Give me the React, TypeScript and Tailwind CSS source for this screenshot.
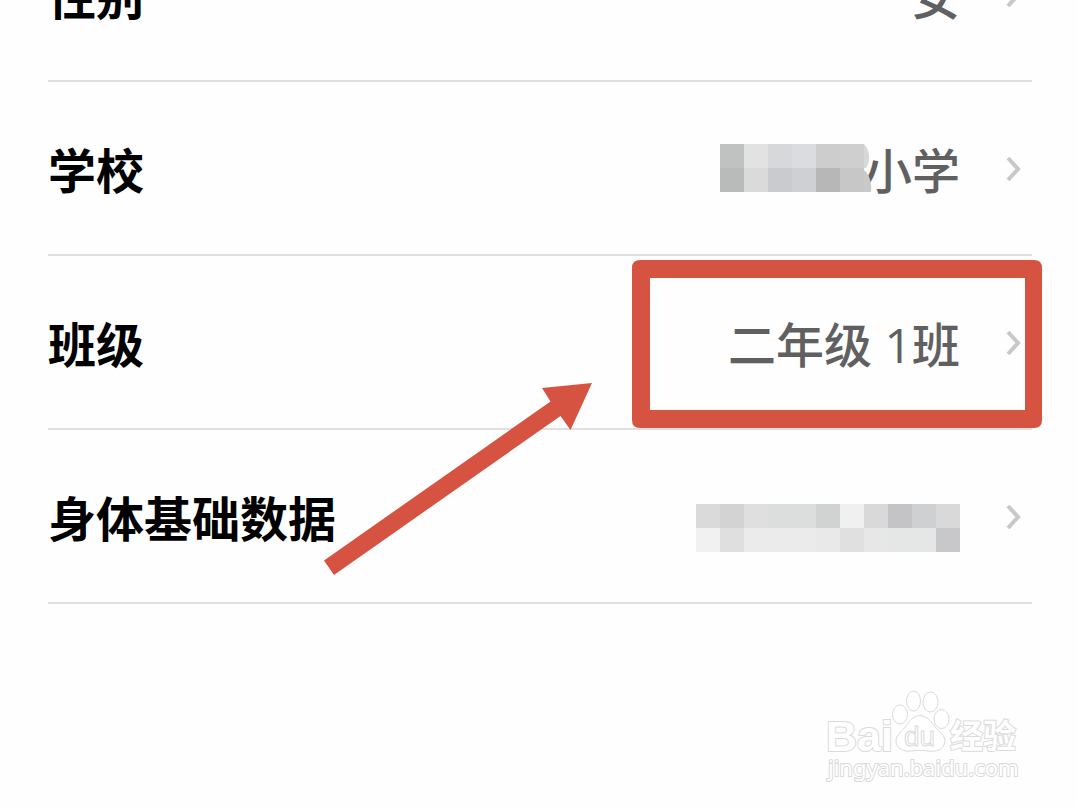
import React from "react";

const RED = "#d65342";

type MosaicProps = {
    colors: string[][];
    label: string;
    className?: string;
    rounded?: boolean;
};

// blurred out value, squares of 24px
function Mosaic({ colors, label, className, rounded }: MosaicProps) {
    const width = colors[0].length * 24;
    return (
        <svg role="img" aria-label={label} width={rounded ? 152 : width} height={48} className={className} shapeRendering="crispEdges">
            {colors.map((row, y) =>
                row.map((color, x) => (
                    <rect key={`${x}-${y}`} x={x * 24} y={y * 24} width={24} height={24} fill={color} />
                ))
            )}
            {rounded && (
                <>
                    <path d="M144 0C150 6 151 17 146 24L144 24Z" fill="#d8d8d8" shapeRendering="auto" />
                    <path d="M144 26C149 30 152 38 151 48L144 48Z" fill="#c9c9c9" shapeRendering="auto" />
                </>
            )}
        </svg>
    );
}

function Chevron() {
    return (
        <svg width={24} height={32} viewBox="0 0 24 32" fill="none" stroke="#c8c8c8" strokeWidth={4} className="ml-10 mr-2 mt-0.5">
            <path d="M8 5L18 16L8 27" />
        </svg>
    );
}

type RowProps = {
    title: string;
    children: React.ReactNode;
    overlay?: React.ReactNode;
};

function Row({ title, children, overlay }: RowProps) {
    return (
        <li className="relative border-b-2 border-[#e0e0e0]">
            <button type="button" className="flex h-[172px] w-full items-center justify-between text-left">
                <span className="pt-1.5 font-bold text-black">{title}</span>
                <span className="flex items-center font-medium text-[#606060]">
                    {children}
                    <Chevron />
                </span>
            </button>
            {overlay}
        </li>
    );
}

function Highlight() {
    return (
        <div className="pointer-events-none">
            <div className="absolute -right-[10px] top-1 h-[168px] w-[410px]">
                <svg className="h-full w-full" viewBox="0 0 410 168">
                    <path
                        fill={RED}
                        fillRule="evenodd"
                        d="M8 0H402Q410 0 410 8V160Q410 168 402 168H8Q0 168 0 160V8Q0 0 8 0ZM18 18V150H393V18Z"
                    />
                </svg>
            </div>
            <svg className="absolute right-[432px] top-[124px]" width={280} height={200} viewBox="320 380 280 200">
                <path fill={RED} d="M592 383L542 388L550.5 401.5L324 560.5L334 575L560.5 416L570.5 430Z" />
            </svg>
        </div>
    );
}

function Watermark() {
    return (
        <a href="#" aria-label="Baidu 经验" className="absolute bottom-5 right-[49px]">
            <svg width={208} height={104} viewBox="820 684 208 104" fill="#fff" stroke="#dadada" strokeWidth={1}>
                <text x={826} y={752} fontSize={43} fontWeight={700} strokeWidth={2} paintOrder="stroke" fontFamily='"Liberation Sans", Arial, sans-serif'>Bai</text>
                <ellipse cx={900} cy={715.5} rx={7.5} ry={9.5} />
                <ellipse cx={913.5} cy={702} rx={7} ry={10} />
                <ellipse cx={930.5} cy={703} rx={7.5} ry={10} />
                <ellipse cx={941.5} cy={720} rx={7.5} ry={9.5} />
                <path d="M920 716.5C927 717 931 722 935 728C939 733 945 736 945 742C944 751 936 753 928 752C923 751 917 751 912 752C904 753 896 750 896 742C896 736 902 732 906 727C910 722 913 717 920 716.5Z" />
                <text x={904} y={747} fontSize={28} fontFamily='"Liberation Sans", Arial, sans-serif'>du</text>
                <text x={950} y={749} fontSize={33} fontWeight={700} strokeWidth={2} paintOrder="stroke" fontFamily='"Noto Sans CJK SC", sans-serif'>经验</text>
                <text x={828} y={777} fontSize={22} strokeWidth={2} paintOrder="stroke" fontFamily='"Noto Sans", sans-serif'>jingyan.baidu.com</text>
            </svg>
        </a>
    );
}

const schoolColors = [
    ["#bfc2c1", "#e2e2e2", "#d6d8da", "#dadce0", "#cccdcc", "#cfcfcf"],
    ["#b8bbba", "#dadada", "#c9cbce", "#ced0d3", "#b7b7b7", "#c7c7c7"],
];

const bodyColors = [
    ["#dadada", "#d3d3d3", "#dfdfdf", "#dcdedd", "#dcdedd", "#d1d2d2", "#f0f0f0", "#d9d9d9", "#c4c4c6", "#cfd0d2", "#d9d9d9"],
    ["#f1f1f1", "#dfdfdf", "#ebebeb", "#ebebeb", "#ebebeb", "#e9e9e9", "#e0e0e0", "#e7e7e7", "#e5e6e6", "#e5e7e6", "#c8c8ca"],
];

export default function App() {
    return (
        <main
            lang="zh-CN"
            className="relative h-screen overflow-hidden bg-[#fefefe] pl-12 pr-[45px] font-['Open_Sans','Noto_Sans_CJK_SC',sans-serif] text-[48px] leading-[64px]"
        >
            {/* the list is scrolled, first row is half out of view */}
            <ul className="-mt-[92px]">
                <Row title="性别">
                    <span className="pt-1.5">女</span>
                </Row>
                <Row title="学校">
                    <Mosaic colors={schoolColors} label="学校名称" className="relative -mr-2" rounded />
                    <span className="pt-1.5">小学</span>
                </Row>
                <Row title="班级" overlay={<Highlight />}>
                    <span className="pt-1.5">二年级 1班</span>
                </Row>
                <Row title="身体基础数据">
                    <Mosaic colors={bodyColors} label="身体数据" className="mt-6" />
                </Row>
            </ul>
            <Watermark />
        </main>
    );
}
